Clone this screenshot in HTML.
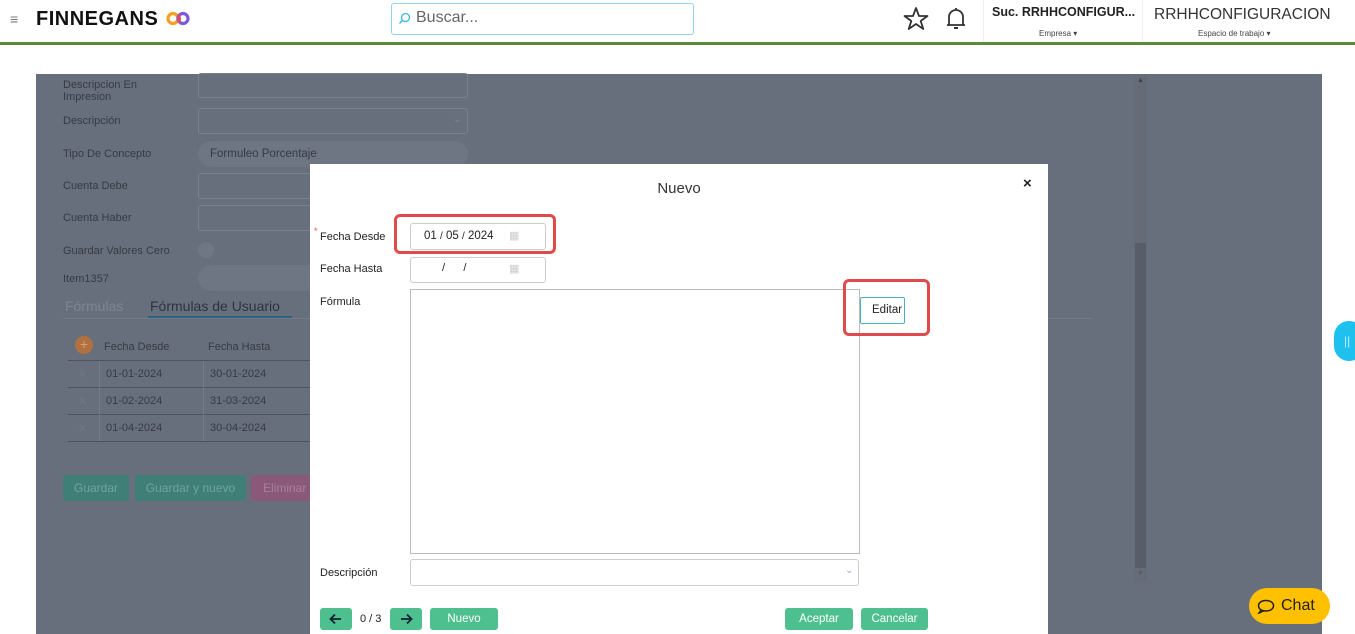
<!DOCTYPE html>
<html><head><meta charset="utf-8"><style>
*{box-sizing:border-box;margin:0;padding:0}
body{width:1355px;height:634px;overflow:hidden;background:#fff;font-family:"Liberation Sans",sans-serif;position:relative;font-size:11px}
.a{position:absolute}
.hdr{left:0;top:0;width:1355px;height:45px;background:#fff;border-bottom:3px solid #5a8a3a}
.ov{left:36px;top:74px;width:1286px;height:560px;background:#686f7c}
.lbl{color:#353b45;font-size:11px}
.fld{border:1px solid #7a818d;border-radius:3px;height:26px}
.modal{left:310px;top:164px;width:738px;height:470px;background:#fff}
.ml{color:#222;font-size:11px}
.in{border:1px solid #ccc;border-radius:3px;background:#fff}
.red{border:3px solid #e04a4a;border-radius:6px}
.btn{background:#4ec08f;color:#fff;border-radius:3px;font-size:11.5px;text-align:center;line-height:22px;height:22px}
.row{color:#353b45;font-size:11px}
</style></head><body>
<div class="a hdr"></div>
<div class="a" style="left:10px;top:11px;color:#777;font-size:14px">≡</div>
<div class="a" style="left:36px;top:8px;font-weight:bold;font-size:20px;color:#111;letter-spacing:0.5px">FINNEGANS</div>
<svg class="a" style="left:166px;top:11px" width="24" height="15" viewBox="0 0 24 15"><circle cx="7" cy="7.5" r="5" fill="none" stroke="#f5a020" stroke-width="3.2"/><circle cx="17" cy="7.5" r="5" fill="none" stroke="#7a5be0" stroke-width="3.2"/><path d="M12 4 A5 5 0 0 1 12 11" stroke="#e04a6a" stroke-width="3.2" fill="none"/></svg>
<div class="a" style="left:391px;top:3px;width:303px;height:32px;border:1px solid #8fd6e6;border-radius:3px"></div>
<svg class="a" style="left:398px;top:12px" width="13" height="13" viewBox="0 0 13 13"><circle cx="7.5" cy="5.5" r="4" fill="none" stroke="#3bb8d8" stroke-width="1.3"/><path d="M4.5 8.5 L1.5 11.5" stroke="#3bb8d8" stroke-width="1.4"/></svg>
<div class="a" style="left:416px;top:9px;font-size:16px;color:#666">Buscar...</div>
<svg class="a" style="left:903px;top:6px" width="26" height="25" viewBox="0 0 26 25"><path d="M13 2 L16 10 L24.5 10 L17.7 15 L20.3 23 L13 18 L5.7 23 L8.3 15 L1.5 10 L10 10 Z" fill="none" stroke="#333" stroke-width="1.8" stroke-linejoin="round"/></svg>
<svg class="a" style="left:945px;top:6px" width="22" height="26" viewBox="0 0 22 26"><path d="M4 19 L4 11 A7 7 0 0 1 18 11 L18 19 Z M2 19 L20 19 M11 2 L11 4" fill="none" stroke="#333" stroke-width="1.8"/><path d="M9 22 L13 22" stroke="#333" stroke-width="2"/></svg>
<div class="a" style="left:983px;top:0;width:1px;height:42px;background:#eee"></div>
<div class="a" style="left:1142px;top:0;width:1px;height:42px;background:#eee"></div>
<div class="a" style="left:992px;top:5px;font-size:12.5px;font-weight:bold;color:#222">Suc. RRHHCONFIGUR...</div>
<div class="a" style="left:1039px;top:29px;font-size:8px;color:#444">Empresa ▾</div>
<div class="a" style="left:1154px;top:6px;font-size:15.5px;color:#333">RRHHCONFIGURACION</div>
<div class="a" style="left:1198px;top:29px;font-size:8px;color:#444">Espacio de trabajo ▾</div>

<div class="a ov"></div>
<div class="a lbl" style="left:63px;top:79px;line-height:12px">Descripcion En<br>Impresion</div>
<div class="a fld" style="left:198px;top:73px;width:270px;height:25px"></div>
<div class="a lbl" style="left:63px;top:115px">Descripción</div>
<div class="a fld" style="left:198px;top:108px;width:270px"></div>
<div class="a" style="left:453px;top:114px;color:#6a8ab0;font-size:10px">⌄</div>
<div class="a lbl" style="left:63px;top:148px">Tipo De Concepto</div>
<div class="a" style="left:198px;top:141px;width:270px;height:26px;background:#6f7683;border-radius:13px"></div>
<div class="a" style="left:210px;top:148px;font-size:11.5px;color:#353b45">Formuleo Porcentaje</div>
<div class="a lbl" style="left:63px;top:180px">Cuenta Debe</div>
<div class="a fld" style="left:198px;top:173px;width:120px"></div>
<div class="a lbl" style="left:63px;top:212px">Cuenta Haber</div>
<div class="a fld" style="left:198px;top:205px;width:120px"></div>
<div class="a lbl" style="left:63px;top:245px">Guardar Valores Cero</div>
<div class="a" style="left:198px;top:242px;width:16px;height:16px;border-radius:50%;background:#707784"></div>
<div class="a lbl" style="left:63px;top:273px">Item1357</div>
<div class="a" style="left:198px;top:265px;width:120px;height:26px;background:#6f7683;border-radius:13px 0 0 13px"></div>
<div class="a" style="left:65px;top:298px;font-size:14px;color:#7f8692">Fórmulas</div>
<div class="a" style="left:150px;top:298px;font-size:14px;color:#2a3440">Fórmulas de Usuario</div>
<div class="a" style="left:148px;top:316px;width:144px;height:3px;background:#2b6383"></div>
<div class="a" style="left:63px;top:318px;width:1030px;height:1px;background:#747b87"></div>
<div class="a" style="left:75px;top:336px;width:18px;height:18px;border-radius:50%;background:#b07040;color:#d8a070;text-align:center;line-height:17px;font-size:14px">+</div>
<div class="a row" style="left:104px;top:341px">Fecha Desde</div>
<div class="a row" style="left:208px;top:341px">Fecha Hasta</div>
<div class="a" style="left:68px;top:360px;width:242px;height:1px;background:#4d5460"></div>
<div class="a" style="left:68px;top:387px;width:242px;height:1px;background:#4d5460"></div>
<div class="a" style="left:68px;top:414px;width:242px;height:1px;background:#4d5460"></div>
<div class="a" style="left:68px;top:441px;width:242px;height:1px;background:#4d5460"></div>
<div class="a" style="left:99px;top:361px;width:1px;height:80px;background:#757c88"></div>
<div class="a" style="left:203px;top:361px;width:1px;height:80px;background:#757c88"></div>
<div class="a row" style="left:78px;top:368px;color:#707784">✕</div><div class="a row" style="left:106px;top:368px">01-01-2024</div><div class="a row" style="left:210px;top:368px">30-01-2024</div>
<div class="a row" style="left:78px;top:395px;color:#707784">✕</div><div class="a row" style="left:106px;top:395px">01-02-2024</div><div class="a row" style="left:210px;top:395px">31-03-2024</div>
<div class="a row" style="left:78px;top:422px;color:#707784">✕</div><div class="a row" style="left:106px;top:422px">01-04-2024</div><div class="a row" style="left:210px;top:422px">30-04-2024</div>
<div class="a" style="left:63px;top:475px;width:66px;height:26px;background:#3f7f78;border-radius:3px;color:#6fa59e;font-size:12px;text-align:center;line-height:26px">Guardar</div>
<div class="a" style="left:135px;top:475px;width:111px;height:26px;background:#3f7f78;border-radius:3px;color:#6fa59e;font-size:12px;text-align:center;line-height:26px">Guardar y nuevo</div>
<div class="a" style="left:251px;top:475px;width:59px;height:26px;background:#8a5878;border-radius:3px 0 0 3px;color:#a9809a;font-size:12px;line-height:26px;padding-left:12px">Eliminar</div>
<div class="a" style="left:1134px;top:74px;width:13px;height:508px;background:#656c78"></div>
<div class="a" style="left:1135px;top:243px;width:11px;height:325px;background:#575e6a"></div>
<div class="a" style="left:1137px;top:77px;font-size:7px;color:#3a404a">▲</div>
<div class="a" style="left:1137px;top:570px;font-size:7px;color:#555c68">▼</div>

<div class="a modal"></div>
<div class="a" style="left:310px;top:180px;width:738px;text-align:center;font-size:15px;color:#333">Nuevo</div>
<div class="a" style="left:1023px;top:175px;font-size:15px;font-weight:bold;color:#222">×</div>
<div class="a" style="left:314px;top:226px;color:#e05050;font-size:9px">*</div>
<div class="a ml" style="left:320px;top:231px">Fecha Desde</div>
<div class="a red" style="left:394px;top:214px;width:162px;height:40px"></div>
<div class="a in" style="left:410px;top:223px;width:136px;height:27px"></div>
<div class="a" style="left:424px;top:230px;font-size:11.5px;color:#222">01 <span style="font-size:10px">/</span> 05 <span style="font-size:10px">/</span> 2024</div>
<div class="a" style="left:509px;top:229px;color:#ccc;font-size:11px">▦</div>
<div class="a ml" style="left:320px;top:263px">Fecha Hasta</div>
<div class="a in" style="left:410px;top:257px;width:136px;height:26px"></div>
<div class="a" style="left:442px;top:262px;font-size:11px;color:#222">/ &nbsp;&nbsp;&nbsp;&nbsp;&nbsp;/</div>
<div class="a" style="left:509px;top:262px;color:#ccc;font-size:11px">▦</div>
<div class="a ml" style="left:320px;top:296px">Fórmula</div>
<div class="a" style="left:410px;top:289px;width:450px;height:265px;border:1px solid #bbb"></div>
<div class="a red" style="left:843px;top:279px;width:87px;height:57px"></div>
<div class="a" style="left:860px;top:297px;width:45px;height:27px;border:1px solid #4bb0c0;border-radius:2px;background:#fff;font-size:11.5px;color:#222;line-height:25px;padding-left:11px">Editar</div>
<div class="a ml" style="left:320px;top:567px">Descripción</div>
<div class="a in" style="left:410px;top:559px;width:449px;height:27px"></div>
<div class="a" style="left:845px;top:565px;color:#8ab0e0;font-size:10px">⌄</div>
<div class="a btn" style="left:320px;top:608px;width:32px"><svg width="14" height="12" viewBox="0 0 14 12" style="margin-top:5px"><path d="M12 6 L2 6 M6 1.5 L1.5 6 L6 10.5" stroke="#123" stroke-width="1.8" fill="none"/></svg></div>
<div class="a" style="left:360px;top:613px;font-size:11px;color:#222">0 / 3</div>
<div class="a btn" style="left:390px;top:608px;width:32px"><svg width="14" height="12" viewBox="0 0 14 12" style="margin-top:5px"><path d="M2 6 L12 6 M8 1.5 L12.5 6 L8 10.5" stroke="#123" stroke-width="1.8" fill="none"/></svg></div>
<div class="a btn" style="left:430px;top:608px;width:68px">Nuevo</div>
<div class="a btn" style="left:785px;top:608px;width:68px">Aceptar</div>
<div class="a btn" style="left:861px;top:608px;width:67px">Cancelar</div>

<div class="a" style="left:1334px;top:321px;width:30px;height:40px;border-radius:20px;background:#1ec0ee;color:#bfefff;font-size:12px;line-height:40px;padding-left:10px">||</div>
<div class="a" style="left:1249px;top:588px;width:81px;height:36px;border-radius:18px;background:#ffc000;color:#222;font-size:16px;line-height:36px;padding-left:32px">Chat</div>
<svg class="a" style="left:1257px;top:599px" width="18" height="15" viewBox="0 0 18 15"><path d="M9 1.5 C4.5 1.5 1.5 3.8 1.5 6.8 C1.5 9.8 4.5 12 9 12 C13.5 12 16.5 9.8 16.5 6.8 C16.5 3.8 13.5 1.5 9 1.5 Z M4 11 L2 14 L6.5 12" fill="none" stroke="#222" stroke-width="1.5"/></svg>
</body></html>
